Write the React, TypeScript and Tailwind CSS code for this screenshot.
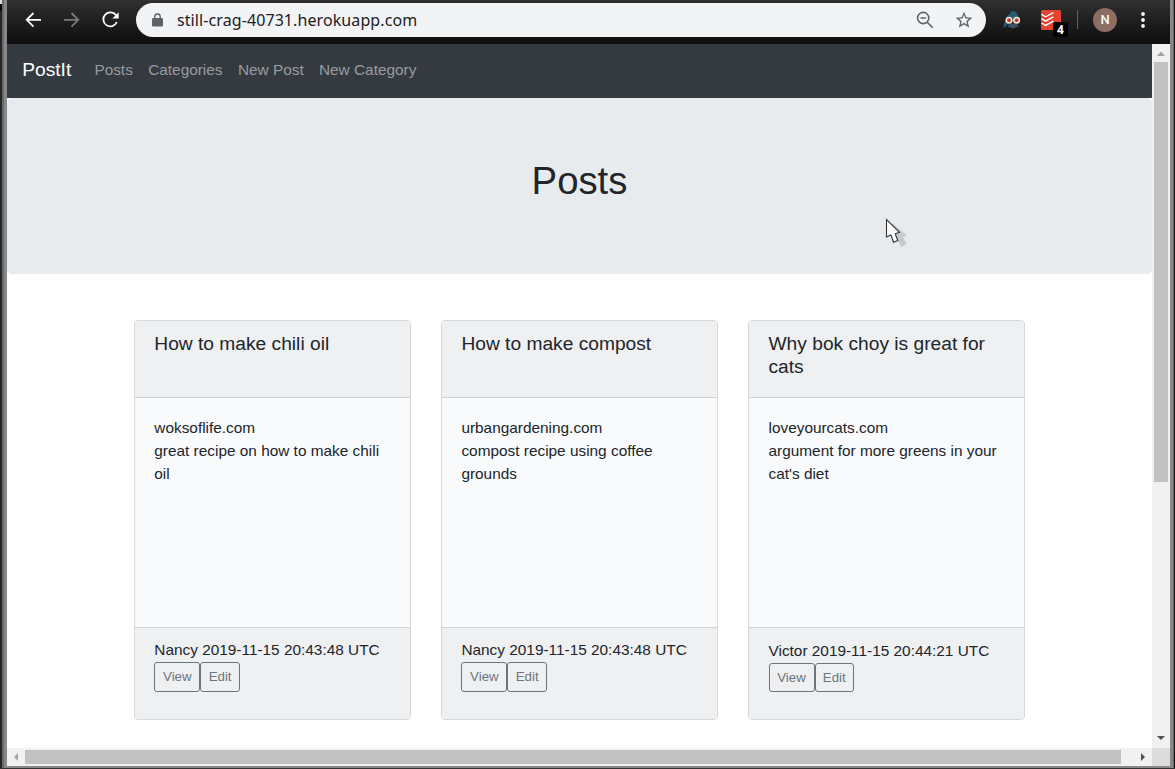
import React from "react";

const posts = [
  { title: "How to make chili oil", url: "woksoflife.com", text: "great recipe on how to make chili oil", by: "Nancy 2019-11-15 20:43:48 UTC", pad: "pt-[10px]", inset: "px-[19.3px]", label: "leading-[27px]", height: "h-[30px]" },
  { title: "How to make compost", url: "urbangardening.com", text: "compost recipe using coffee grounds", by: "Nancy 2019-11-15 20:43:48 UTC", pad: "pt-[10px]", inset: "px-[19.4px]", label: "leading-[27px]", height: "h-[30px]" },
  { title: "Why bok choy is great for cats", url: "loveyourcats.com", text: "argument for more greens in your cat's diet", by: "Victor 2019-11-15 20:44:21 UTC", pad: "pt-[11px]", inset: "px-[19.5px]", label: "leading-[25px]", height: "h-[29px]" },
];

function Toolbar() {
  return (
    <header className="flex h-[44px] shrink-0 items-start bg-linear-to-b from-[#303030] via-[#1e1e1e] to-[#0e0e0e] pt-[3px]">
      <div className="flex h-[34px] w-[129px] shrink-0 items-center">
        <svg width="129" height="34" viewBox="0 0 129 34" fill="none" strokeWidth="1.8">
          <path d="M34 16.8H20M26.5 10L19.7 16.8L26.5 23.6" stroke="#fff" />
          <path d="M57 16.8H71M64.5 10L71.3 16.8L64.5 23.6" stroke="#7b7b7b" />
          <path d="M109.2 12.5A7 7 0 1 0 109.8 19" stroke="#fff" />
          <path d="M111.7 9.2V15.6H105.3Z" fill="#fff" />
        </svg>
      </div>
      <div className="flex h-[34px] w-[850px] shrink-0 items-center rounded-full bg-[#f1f3f4]">
        <svg className="ml-[16px]" width="11" height="14" viewBox="0 0 11 14">
          <path d="M2.8 6V3.7a2.7 2.7 0 0 1 5.4 0V6" fill="none" stroke="#5f6368" strokeWidth="1.4" />
          <rect x="0" y="5" width="11" height="8.5" rx="1.2" fill="#5f6368" />
        </svg>
        <span className="ml-[14px] w-[730px] whitespace-nowrap font-['Noto_Sans',sans-serif] text-[16px] leading-[34px] tracking-[0.09px] text-[#202124]">still-crag-40731.herokuapp.com</span>
        <svg className="ml-[9px] shrink-0" width="18" height="18" viewBox="0 0 18 18" fill="none" stroke="#5f6368" strokeWidth="1.6">
          <circle cx="7.2" cy="7" r="5.6" />
          <path d="M4.5 7H9.9M11.2 11.2L16.8 16.8" />
        </svg>
        <svg className="ml-[20px] shrink-0" width="20" height="20" viewBox="0 0 24 24" fill="#5f6368">
          <path d="M22 9.24l-7.19-.62L12 2 9.19 8.63 2 9.24l5.46 4.73L5.82 21 12 17.27 18.18 21l-1.63-7.03L22 9.24zM12 15.4l-3.76 2.27 1-4.28-3.32-2.88 4.38-.38L12 6.1l1.71 4.04 4.38.38-3.32 2.88 1 4.28L12 15.4z" />
        </svg>
      </div>
      <svg className="ml-[17px] mt-[7px] shrink-0" width="20" height="20" viewBox="0 0 20 20">
        <path d="M3 9Q3 7 5 5L7 4L8 1.5Q11 0 14 3L15 6L17 8V12H4Z" fill="#285b74" />
        <path d="M3 9Q1 12 0.5 18L3.5 16L5 12Z" fill="#255871" />
        <path d="M6 14L9 13.5L11 13.5L14 14L16 17L13 16.5L12 18H8L7 16.5L4.5 17.5Z" fill="#3a5263" />
        <circle cx="6" cy="10.3" r="3.5" fill="#f3e4d5" />
        <circle cx="13.6" cy="10.3" r="3.5" fill="#f3e4d5" />
        <circle cx="6" cy="10.3" r="2" fill="#d04c3c" />
        <circle cx="13.6" cy="10.3" r="2" fill="#d04c3c" />
        <circle cx="6.2" cy="10.2" r=".6" fill="#492d31" />
        <circle cx="13.4" cy="10.2" r=".6" fill="#492d31" />
      </svg>
      <div className="relative ml-[18px] mt-[7px] h-[20px] w-[20px] shrink-0">
        <svg width="20" height="20" viewBox="0 0 20 20">
          <rect width="20" height="20" rx="1.5" fill="#e44332" />
          <path d="M0.5 4.4L4.5 6.8L12.5 2.6M0.5 8.7L4.5 11.1L12.5 6.9M0.5 13L4.5 15.4L12.5 11.2" fill="none" stroke="#fff" strokeWidth="1.4" />
        </svg>
        <span className="absolute left-[12px] top-[12px] h-[15px] w-[15px] rounded-[2px] bg-black text-center font-['Open_Sans',sans-serif] text-[12px] font-bold leading-[16px] text-white">4</span>
      </div>
      <div className="ml-[16px] mt-[7px] h-[19px] w-px shrink-0 bg-[#606060]" />
      <div className="ml-[15px] mt-[5px] h-[24px] w-[24px] shrink-0 rounded-full bg-[#8d6e63] text-center font-[Roboto,sans-serif] text-[13px] font-medium leading-[24px] text-white">N</div>
      <svg className="ml-[24px] mt-[8px] shrink-0" width="4" height="18" viewBox="0 0 4 18" fill="#fff">
        <circle cx="2" cy="3" r="1.9" />
        <circle cx="2" cy="9" r="1.9" />
        <circle cx="2" cy="15" r="1.9" />
      </svg>
    </header>
  );
}

function PostCard({ post }: { post: (typeof posts)[number] }) {
  return (
    <article className="flex h-[400px] w-[277px] flex-col rounded-[4px] border border-[#d6d8da] bg-[#f9fafc]">
      <h4 className={`h-[77px] rounded-t-[3px] border-b border-[#d0d2d5] bg-[#eff0f2] pt-[11px] text-[19.2px] leading-[23px] ${post.inset}`}>{post.title}</h4>
      <div className={`h-[229px] pt-[18px] leading-[23px] ${post.inset}`}>
        <p>{post.url}</p>
        <p>{post.text}</p>
      </div>
      <footer className={`flex-1 rounded-b-[3px] border-t border-[#d0d2d5] bg-[#eff0f2] ${post.inset} ${post.pad}`}>
        <p className="whitespace-nowrap leading-[23px]">{post.by}</p>
        <div className={`mt-px flex text-[13.3px] text-[#6c757d] ${post.label}`}>
          <button className={`w-[46px] rounded-[3px] border border-[#6c757d] pb-px ${post.height}`}>View</button>
          <button className={`w-[39.6px] rounded-[3px] border border-[#6c757d] pb-px ${post.height}`}>Edit</button>
        </div>
      </footer>
    </article>
  );
}

export default function App() {
  return (
    <div className="relative flex h-[769px] w-[1175px] overflow-hidden border-b border-[#333] bg-[#888] font-['Liberation_Sans',Arial,sans-serif] text-[15.38px] text-[#212529]">
      <div className="flex w-[7px] shrink-0">
        <div className="flex w-[2px] flex-col">
          <div className="h-[4px] bg-[#ddd]" />
          <div className="h-[7px] bg-[#080808]" />
          <div className="flex-1 bg-[#262626]" />
        </div>
        <div className="w-[2px] bg-[#6a6a6a]" />
      </div>
      <div className="flex w-[1163px] shrink-0 flex-col">
        <Toolbar />
        <div className="flex h-[704px] shrink-0">
          <main className="w-[1145px] shrink-0 bg-white">
            <nav className="flex h-[54px] items-center bg-[#343a40] pb-[2px] text-[#999c9f]">
              <span className="ml-[15.2px] w-[72.2px] text-[19.2px] text-white">PostIt</span>
              <span className="w-[53.8px]">Posts</span>
              <span className="w-[89.8px]">Categories</span>
              <span className="w-[81px]">New Post</span>
              <span>New Category</span>
            </nav>
            <section className="flex h-[176px] justify-center rounded-[5px] bg-[#e8ebee] pt-[60px]">
              <h1 className="text-[38.33px] leading-[46px]">Posts</h1>
            </section>
            <section className="ml-[127px] mt-[46px] flex gap-[30px]">
              {posts.map((post) => <PostCard key={post.title} post={post} />)}
            </section>
          </main>
          <div className="flex w-[18px] flex-col items-center bg-[#f1f1f1]">
            <svg width="18" height="18" viewBox="0 0 18 18"><path d="M5 12L9 7.5L13 12Z" fill="#a3a3a3" /></svg>
            <div className="h-[420px] w-[14px] bg-[#c1c1c1]" />
            <svg className="mt-auto" width="18" height="18" viewBox="0 0 18 18"><path d="M5 6L9 10L13 6Z" fill="#505050" /></svg>
          </div>
        </div>
        <div className="flex h-[18px] shrink-0 items-center bg-[#f1f1f1]">
          <svg width="18" height="18" viewBox="0 0 18 18"><path d="M11 5L7 9L11 13Z" fill="#a3a3a3" /></svg>
          <div className="h-[14px] w-[1096px] bg-[#c1c1c1]" />
          <svg className="ml-[13px]" width="18" height="18" viewBox="0 0 18 18"><path d="M7 5L11 9L7 13Z" fill="#505050" /></svg>
          <div className="ml-auto h-[18px] w-[18px] bg-[#dcdcdc]" />
        </div>
      </div>
      <div className="ml-auto flex w-[2px]">
        <div className="w-px bg-[#666]" />
        <div className="w-px bg-[#111]" />
      </div>
      <svg className="absolute left-[884px] top-[217px]" width="28" height="34" viewBox="0 0 28 34">
        <path d="M8 6L23 18.5L19 20L22.5 27L17.5 30L14 24L8 25Z" fill="#b9bcbf" opacity=".7" />
        <path d="M2.5 2.5V19.9L6.9 18L9.6 25.3L13.8 23.5L11.2 16.8L15.5 15.3Z" fill="#fff" stroke="#333" strokeWidth="1.1" />
      </svg>
    </div>
  );
}
